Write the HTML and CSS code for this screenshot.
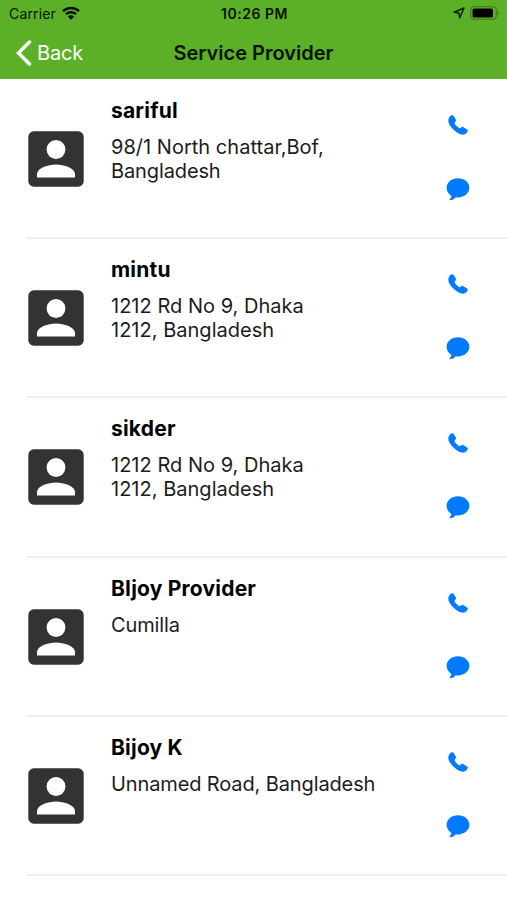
FILE: index.html
```html
<!DOCTYPE html>
<html lang="en">
<head>
    <meta charset="utf-8">
    <title>Service Provider</title>
    <link rel="stylesheet" href="styles.css">
</head>
<body>
    <svg class="icon-defs" aria-hidden="true">
        <symbol id="icon-person" viewBox="0 0 56 56">
            <rect x=".3" y=".3" width="55.400" height="55.400" rx="5.500" fill="#333"/>
            <circle cx="28" cy="18.500" r="9.400" fill="#fff"/>
            <path d="M9 46.500v-3.200C9 37 20 33.500 28 33.500s19 3.500 19 9.800v3.200z" fill="#fff"/>
        </symbol>
        <symbol id="icon-phone" viewBox="0 0 20 20">
            <path d="M.3 5.200C.6 2.500 2.200.6 3.800.2c.8-.2 1.400.2 1.900.9l2 3.100c.5.9.4 1.700-.3 2.500-.8.9-1 1.300-.6 2.100.9 1.700 2.300 3.200 4.200 4.200.8.4 1.300.3 2-.5.7-.7 1.600-.9 2.500-.3l3.500 2.300c.8.6 1 1.200.6 2-.8 1.900-2.700 3.300-4.900 3.300-2.700 0-6.400-2.300-9.300-5.200C2.300 11.600 0 8 .3 5.200z"/>
        </symbol>
        <symbol id="icon-chat" viewBox="0 0 24 23">
            <path d="M12 .3c6.400 0 11.400 4.200 11.400 9.500S18.400 19.400 12 19.400c-.8 0-1.500 0-2.300-.2-1.300 1.700-3.500 3-5.800 3-.5 0-.6-.5-.3-.8 1-1 1.700-2.200 1.800-3.500C2.500 16.200.6 13.300.6 9.800.6 4.500 5.600.3 12 .3z"/>
        </symbol>
    </svg>

    <header class="header">
        <div class="status-bar">
            <div class="status-left">
                <span class="carrier">Carrier</span>
                <svg class="wifi" viewBox="0 0 18 14">
                    <path d="M1 5.200C5.500.8 12.500.8 17 5.200M3.900 8.200c2.900-2.700 7.300-2.700 10.200 0" fill="none" stroke="#071204" stroke-width="2.500"/>
                    <path d="M9 13.700L5.800 10.500c1.800-1.600 4.600-1.600 6.400 0z" fill="#071204"/>
                </svg>
            </div>
            <span class="time">10:26 PM</span>
            <div class="status-right">
                <svg class="location" viewBox="0 0 12 12">
                    <path d="M1 5.300L11 1 6.700 11 6 6z" fill="none" stroke="#0b2105" stroke-width="1.500" stroke-linejoin="round"/>
                </svg>
                <svg class="battery" viewBox="0 0 30 14">
                    <rect x=".7" y=".7" width="25.600" height="12.600" rx="3.500" fill="none" stroke="#3b761d" stroke-width="1.100"/>
                    <rect x="2.500" y="2.500" width="20.500" height="9" rx="1.500"/>
                    <path d="M27.500 4.800c2 .8 2 3.600 0 4.400z" fill="#3b761d"/>
                </svg>
            </div>
        </div>
        <nav class="nav-bar">
            <a class="back">
                <svg class="chevron" viewBox="0 0 16 26">
                    <path d="M13.500 2L2.500 13l11 11" fill="none" stroke="#fff" stroke-width="3.500" stroke-linecap="round"/>
                </svg>
                <span class="back-text">Back</span>
            </a>
            <h1 class="title">Service Provider</h1>
        </nav>
    </header>

    <ul class="providers">
        <li class="provider">
            <svg class="avatar"><use href="#icon-person"/></svg>
            <div class="info">
                <h2 class="name">sariful</h2>
                <p class="address"><span class="loose">98/1 North chattar,Bof,</span><br>Bangladesh</p>
            </div>
            <div class="actions">
                <svg class="phone"><use href="#icon-phone"/></svg>
                <svg class="chat"><use href="#icon-chat"/></svg>
            </div>
        </li>
        <li class="provider">
            <svg class="avatar"><use href="#icon-person"/></svg>
            <div class="info">
                <h2 class="name">mintu</h2>
                <p class="address"><span class="loose">1212 Rd No 9, Dhaka<br>1212, Bangladesh</span></p>
            </div>
            <div class="actions">
                <svg class="phone"><use href="#icon-phone"/></svg>
                <svg class="chat"><use href="#icon-chat"/></svg>
            </div>
        </li>
        <li class="provider">
            <svg class="avatar"><use href="#icon-person"/></svg>
            <div class="info">
                <h2 class="name">sikder</h2>
                <p class="address"><span class="loose">1212 Rd No 9, Dhaka<br>1212, Bangladesh</span></p>
            </div>
            <div class="actions">
                <svg class="phone"><use href="#icon-phone"/></svg>
                <svg class="chat"><use href="#icon-chat"/></svg>
            </div>
        </li>
        <li class="provider">
            <svg class="avatar"><use href="#icon-person"/></svg>
            <div class="info">
                <h2 class="name">BIjoy Provider</h2>
                <p class="address">Cumilla</p>
            </div>
            <div class="actions">
                <svg class="phone"><use href="#icon-phone"/></svg>
                <svg class="chat"><use href="#icon-chat"/></svg>
            </div>
        </li>
        <li class="provider">
            <svg class="avatar"><use href="#icon-person"/></svg>
            <div class="info">
                <h2 class="name">Bijoy K</h2>
                <p class="address">Unnamed Road, Bangladesh</p>
            </div>
            <div class="actions">
                <svg class="phone"><use href="#icon-phone"/></svg>
                <svg class="chat"><use href="#icon-chat"/></svg>
            </div>
        </li>
    </ul>
</body>
</html>
```
FILE: styles.css
```css
* {
    box-sizing: border-box;
}

body {
    margin: 0;
    height: 900px;
    overflow: hidden;
    background-color: #fff;
    color: #000;
    font-family: Inter, "Liberation Sans", sans-serif;
}

svg {
    display: block;
    flex-shrink: 0;
}

.icon-defs {
    display: none;
}

.header {
    height: 79px;
    background-color: #5cb028;
}

.status-bar,
.nav-bar {
    display: grid;
    grid-template-columns: 1fr auto 1fr;
    align-items: center;
}

.status-bar {
    height: 26px;
    padding: 0 7px 0 9px;
    color: #071204;
    font-size: 14px;
}

.status-left,
.status-right {
    display: flex;
    align-items: center;
}

.status-left {
    gap: 6px;
}

.carrier {
    letter-spacing: 0.15px;
}

.status-right {
    justify-content: flex-end;
    gap: 5px;
}

.wifi {
    width: 18px;
    height: 14px;
}

.time {
    font-weight: 600;
    letter-spacing: 0.5px;
}

.location {
    width: 12px;
    height: 12px;
}

.battery {
    width: 30px;
    height: 14px;
}

.nav-bar {
    height: 53px;
    padding: 0 16px;
}

.back {
    display: flex;
    align-items: center;
    gap: 5px;
    color: #fff;
    font-size: 20px;
}

.back-text {
    letter-spacing: -0.2px;
}

.chevron {
    width: 16px;
    height: 26px;
}

.title {
    margin: 0;
    color: #071204;
    font-size: 20px;
    font-weight: 600;
}

.providers {
    margin: 0;
    padding: 1px 0 0;
    list-style: none;
}

.provider {
    display: flex;
    height: 159.2px;
    margin-left: 26px;
    border-bottom: 2px solid #efefef;
}

.avatar {
    width: 56px;
    height: 56px;
    margin: 51px 27px 0 2px;
}

.info {
    flex: 1;
    padding-top: 17px;
    white-space: nowrap;
}

.name {
    margin: 0 0 10px;
    font-size: 21px;
    font-weight: 700;
    line-height: 28px;
    letter-spacing: 0.2px;
}

.address {
    margin: 0;
    color: #1c1c1c;
    font-size: 20px;
    line-height: 24px;
    letter-spacing: -0.12px;
}

.loose {
    letter-spacing: 0.02px;
}

.actions {
    display: flex;
    flex-direction: column;
    align-items: center;
    width: 24px;
    margin-right: 37px;
    padding-top: 35px;
    fill: #007aff;
}

.phone {
    width: 20px;
    height: 20px;
    margin-bottom: 43px;
}

.chat {
    width: 24px;
    height: 23px;
}
```
